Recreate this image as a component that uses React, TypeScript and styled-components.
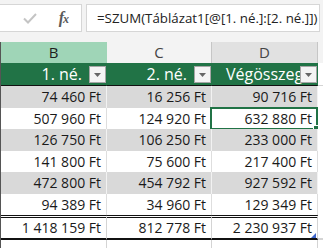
import React from 'react'
import styled, { createGlobalStyle } from 'styled-components'

const GREEN = '#217346'

const GlobalStyle = createGlobalStyle`
  html, body {
    margin: 0;
    padding: 0;
    background: #fff;
  }
  body {
    font-family: 'Open Sans', 'Noto Sans', sans-serif;
    overflow: hidden;
  }
`

const Window = styled.div`
  width: 323px;
  height: 248px;
  overflow: hidden;
  background: #fff;
`

const FormulaBar = styled.div`
  display: flex;
  gap: 4px;
  height: 42px;
  padding: 4px 3px 0 0;
  box-sizing: border-box;
  background: #f3f3f3;
`

const Buttons = styled.div`
  width: 82px;
  height: 28px;
  box-sizing: border-box;
  background: #fff;
  border: 1px solid #d6d6d6;
  border-left: none;
  display: flex;
  align-items: center;
  justify-content: flex-end;
  gap: 22px;
  padding-right: 13px;
`

const Fx = styled.span`
  font-family: 'Liberation Serif', serif;
  font-style: italic;
  font-weight: bold;
  font-size: 16px;
  line-height: 16px;
  color: #5a5a5a;
  letter-spacing: -1px;

  & > small {
    font-size: 12px;
  }
`

const FormulaInput = styled.div`
  flex: 1;
  height: 28px;
  box-sizing: border-box;
  background: #fff;
  border: 1px solid #d6d6d6;
  padding-left: 10px;
  font-size: 13.3px;
  line-height: 26px;
  color: #222;
  white-space: nowrap;
  overflow: hidden;
`

const Grid = styled.div`
  display: grid;
  grid-template-columns: 106px 105px 106px 1fr;
  border-left: 1px solid #555;
`

const ColHeader = styled.div<{ $tone: 'active' | 'plain' | 'dim' }>`
  height: 21px;
  box-sizing: border-box;
  background: ${({ $tone }) => ($tone === 'active' ? '#9fd5b7' : $tone === 'dim' ? '#e1e1e1' : '#f3f3f3')};
  border-right: 1px solid ${({ $tone }) => ($tone === 'active' ? '#9fd5b7' : '#c6c6c6')};
  color: ${({ $tone }) => ($tone === 'active' ? '#1e1e1e' : '#444')};
  font-size: 15px;
  line-height: 21px;
  text-align: center;
`

const HeadCell = styled.div<{ $last?: boolean; $wide?: boolean }>`
  position: relative;
  height: 23px;
  box-sizing: border-box;
  background: ${({ $last }) => ($last ? '#fff' : GREEN)};
  border-right: 1px solid ${({ $last }) => ($last ? '#d4d4d4' : GREEN)};
  border-bottom: 1px solid ${({ $last }) => ($last ? '#d4d4d4' : '#111')};
  padding: ${({ $wide }) => ($wide ? '0 0 0 14px' : '0 24px 0 0')};
  color: #fff;
  font-size: 16px;
  line-height: 22px;
  text-align: ${({ $wide }) => ($wide ? 'left' : 'right')};
  white-space: nowrap;
  overflow: hidden;
`

const DropButton = styled.span`
  position: absolute;
  right: 0;
  top: 3px;
  width: 17px;
  height: 17px;
  box-sizing: border-box;
  background: #f4f4f4;
  border: 1px solid #a6a6a6;
  display: flex;
  align-items: center;
  justify-content: center;
`

const Cell = styled.div<{ $band?: boolean; $tall?: boolean; $edge?: boolean }>`
  position: relative;
  height: ${({ $tall }) => ($tall ? 22 : 21)}px;
  box-sizing: border-box;
  background: ${({ $band }) => ($band ? '#d9d9d9' : '#fff')};
  border-right: 1px solid ${({ $band, $edge }) => ($edge ? '#d4d4d4' : $band ? '#f2f2f2' : '#dedede')};
  padding-right: 5px;
  color: #1a1a1a;
  font-size: 14px;
  line-height: ${({ $tall }) => ($tall ? 22 : 21)}px;
  text-align: right;
  white-space: nowrap;
`

const Selection = styled.span`
  position: absolute;
  left: -2px;
  top: -1px;
  right: -1px;
  bottom: -1px;
  border: 2px solid ${GREEN};
  pointer-events: none;

  &::after {
    content: '';
    position: absolute;
    right: -4px;
    bottom: -4px;
    width: 5px;
    height: 5px;
    background: ${GREEN};
    border: 1px solid #fff;
  }
`

const TotalCell = styled.div<{ $edge?: boolean }>`
  position: relative;
  height: 25px;
  box-sizing: border-box;
  background: #fff;
  border-top: ${({ $edge }) => ($edge ? 'none' : '3px double #111')};
  border-bottom: 2px solid ${({ $edge }) => ($edge ? '#d4d4d4' : '#111')};
  border-right: 1px solid #d4d4d4;
  padding-right: 5px;
  color: #1a1a1a;
  font-size: 14px;
  line-height: 20px;
  text-align: right;
  white-space: nowrap;
`

const ResizeHandle = styled.span`
  position: absolute;
  right: 1px;
  bottom: 0;
  width: 0;
  height: 0;
  border-left: 5px solid transparent;
  border-bottom: 5px solid #3b64c9;
`

const EmptyCell = styled.div`
  height: 21px;
  box-sizing: border-box;
  border-right: 1px solid #d4d4d4;
`

const rows = [
  [74460, 16256, 90716],
  [507960, 124920, 632880],
  [126750, 106250, 233000],
  [141800, 75600, 217400],
  [472800, 454792, 927592],
  [94389, 34960, 129349],
]

const totals = [0, 1, 2].map(i => rows.reduce((s, r) => s + r[i], 0))

const ft = (n: number) => n.toString().replace(/\B(?=(\d{3})+(?!\d))/g, ' ') + ' Ft'

const headers = [
  { label: '1. né.', wide: false },
  { label: '2. né.', wide: false },
  { label: 'Végösszeg', wide: true },
]

const Arrow = () => (
  <svg width="7" height="4" viewBox="0 0 7 4">
    <path d="M0 0h7L3.5 4z" fill="#666" />
  </svg>
)

const Check = () => (
  <svg width="14" height="11" viewBox="0 0 14 11">
    <path d="M1 5.5l4 4L13 1" fill="none" stroke="#c4c4c4" strokeWidth="2" />
  </svg>
)

export default function App() {
  return (
    <Window>
      <GlobalStyle />
      <FormulaBar>
        <Buttons>
          <Check />
          <Fx>f<small>x</small></Fx>
        </Buttons>
        <FormulaInput>=SZUM(Táblázat1[@[1. né.]:[2. né.]])</FormulaInput>
      </FormulaBar>

      <Grid>
        <ColHeader $tone="active">B</ColHeader>
        <ColHeader $tone="plain">C</ColHeader>
        <ColHeader $tone="dim">D</ColHeader>
        <ColHeader $tone="plain" />

        {headers.map(h => (
          <HeadCell key={h.label} $wide={h.wide}>
            {h.label}
            <DropButton>
              <Arrow />
            </DropButton>
          </HeadCell>
        ))}
        <HeadCell $last />

        {rows.map((r, ri) => (
          <React.Fragment key={ri}>
            {r.map((v, ci) => (
              <Cell key={ci} $band={ri % 2 === 0} $tall={ri % 2 === 0}>
                {ft(v)}
                {ri === 1 && ci === 2 && <Selection />}
              </Cell>
            ))}
            <Cell $edge $tall={ri % 2 === 0} />
          </React.Fragment>
        ))}

        {totals.map((t, i) => (
          <TotalCell key={i}>
            {ft(t)}
            {i === 2 && <ResizeHandle />}
          </TotalCell>
        ))}
        <TotalCell $edge />

        <EmptyCell />
        <EmptyCell />
        <EmptyCell />
        <EmptyCell />
      </Grid>
    </Window>
  )
}
